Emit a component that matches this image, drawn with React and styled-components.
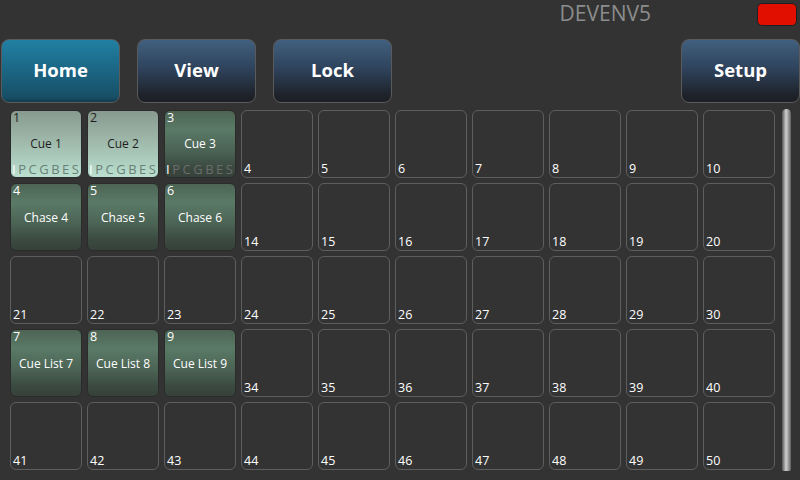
import React from 'react'
import styled, { createGlobalStyle, css } from 'styled-components'

const GlobalStyle = createGlobalStyle`
  body {
    margin: 0;
    background: #333333;
    font-family: "Open Sans", "DejaVu Sans", sans-serif;
  }
`

const Screen = styled.div`
  width: 800px;
  height: 480px;
  background: #333333;
  display: flex;
  flex-direction: column;
  overflow: hidden;
`

const TopBar = styled.div`
  height: 39px;
  display: flex;
  align-items: flex-start;
  justify-content: flex-end;
  padding-right: 3px;
  box-sizing: border-box;
`

const Title = styled.div`
  margin: 0 106px 0 0;
  font-size: 21px;
  line-height: 26px;
  color: #8c8c8c;
`

const Indicator = styled.div`
  margin-top: 3px;
  width: 40px;
  height: 23px;
  background: #e00f00;
  border: 1px solid #1f1f1f;
  border-radius: 5px;
  box-sizing: border-box;
`

const ButtonBar = styled.div`
  height: 64px;
  display: flex;
  gap: 17px;
  padding-left: 1px;
`

const NavButton = styled.button`
  width: 119px;
  height: 64px;
  border: 1px solid #5a5a5a;
  border-radius: 8px;
  color: #ffffff;
  font-family: inherit;
  font-size: 18.5px;
  font-weight: 700;
  padding: 0 0 3px 0;
  background: ${p => p.$active
    ? 'linear-gradient(#2180a3 0%, #1b6583 50%, #174f66 92%, #123c4d 100%)'
    : 'linear-gradient(#41607f 0%, #2d4058 50%, #1f232b 88%, #1c1f25 100%)'};
  ${p => p.$right && css`margin-left: auto;`}
`

const Body = styled.div`
  flex: 1;
  display: flex;
  padding: 7px 0 0 10px;
`

const Grid = styled.div`
  display: grid;
  grid-template-columns: repeat(10, 72px);
  grid-auto-rows: 68px;
  column-gap: 5px;
  row-gap: 5px;
  align-content: start;
`

const Scrollbar = styled.div`
  width: 9px;
  height: 362px;
  margin: -1px 0 0 7px;
  border-radius: 5px 5px 2px 2px;
  background: linear-gradient(to right, #555 0%, #8a8a8a 20%, #d0d0d0 45%, #a0a0a0 70%, #5e5e5e 100%);
`

const cellLook = {
  empty: css`
    border: 1px solid #5e5e5e;
    background: #333333;
  `,
  light: css`
    border: 1px solid #2a2a2a;
    background: linear-gradient(#889a8f 0%, #9eb8aa 45%, #b4d8c9 90%, #bcdfd0 100%);
    color: #1e1e1e;
  `,
  green: css`
    border: 1px solid #2b2b2b;
    background: linear-gradient(#4d6454 0%, #5a7a67 28%, #4b6354 60%, #3b4a41 85%, #364139 100%);
    color: #ffffff;
  `,
}

const Cell = styled.div`
  border-radius: 6px;
  box-sizing: border-box;
  display: flex;
  flex-direction: column;
  color: #ffffff;
  font-size: 12px;
  ${p => cellLook[p.$kind]}
`

const TopNum = styled.div`
  padding: 0 0 0 2px;
  line-height: 14px;
  font-size: 12.5px;
`

const Label = styled.div`
  flex: 1;
  display: flex;
  align-items: center;
  justify-content: center;
  font-size: 12px;
  padding-bottom: ${p => (p.$flags ? '0' : '14px')};
`

const BottomNum = styled.div`
  margin-top: auto;
  padding: 0 0 1px 2px;
  line-height: 14px;
  font-size: 12.5px;
`

const Flags = styled.div`
  display: flex;
  justify-content: space-between;
  padding: 0 2px 1px 1px;
  font-size: 13px;
  line-height: 14px;
  color: ${p => (p.$light ? '#6a8076' : '#6c6c6c')};
`

const Flag = styled.span`
  color: ${p => (p.$on ? '#ffffff' : 'inherit')};
`

const filled = {
  1: { num: 1, label: 'Cue 1', kind: 'light', flags: true },
  2: { num: 2, label: 'Cue 2', kind: 'light', flags: true },
  3: { num: 3, label: 'Cue 3', kind: 'green', flags: true },
  11: { num: 4, label: 'Chase 4', kind: 'green' },
  12: { num: 5, label: 'Chase 5', kind: 'green' },
  13: { num: 6, label: 'Chase 6', kind: 'green' },
  31: { num: 7, label: 'Cue List 7', kind: 'green' },
  32: { num: 8, label: 'Cue List 8', kind: 'green' },
  33: { num: 9, label: 'Cue List 9', kind: 'green' },
}

const FLAGS = ['I', 'P', 'C', 'G', 'B', 'E', 'S']

const PlaybackCell = ({ index }) => {
  const item = filled[index]
  if (!item) {
    return (
      <Cell $kind="empty">
        <BottomNum>{index}</BottomNum>
      </Cell>
    )
  }
  return (
    <Cell $kind={item.kind}>
      <TopNum>{item.num}</TopNum>
      <Label $flags={item.flags}>{item.label}</Label>
      {item.flags && (
        <Flags $light={item.kind === 'light'}>
          {FLAGS.map((f, i) => <Flag key={f} $on={i === 0}>{f}</Flag>)}
        </Flags>
      )}
    </Cell>
  )
}

const App = () => {
  const cells = Array.from({ length: 50 }, (_, i) => i + 1)
  return (
    <Screen>
      <GlobalStyle />
      <TopBar>
        <Title>DEVENV5</Title>
        <Indicator />
      </TopBar>
      <ButtonBar>
        <NavButton $active>Home</NavButton>
        <NavButton>View</NavButton>
        <NavButton>Lock</NavButton>
        <NavButton $right>Setup</NavButton>
      </ButtonBar>
      <Body>
        <Grid>
          {cells.map(i => <PlaybackCell key={i} index={i} />)}
        </Grid>
        <Scrollbar />
      </Body>
    </Screen>
  )
}

export default App
